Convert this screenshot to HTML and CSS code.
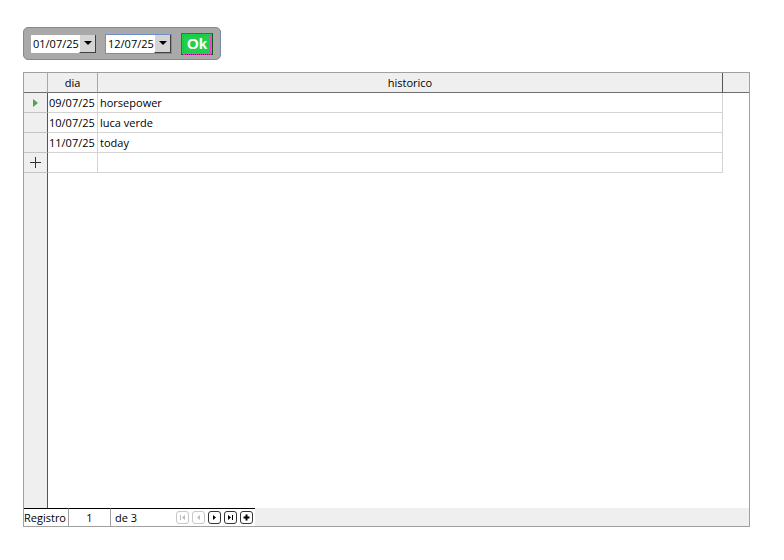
FILE: index.html
```html
<!DOCTYPE html>
<html lang="pt">
<head>
    <meta charset="UTF-8">
    <title>Historico</title>
    <link rel="stylesheet" href="styles.css">
</head>
<body>

    <!-- Filter panel -->
    <div class="filter">
        <div class="datebox">
            <span class="date-text">01/07/25</span>
            <span class="drop"><span class="tri"></span></span>
        </div>
        <div class="datebox active">
            <span class="date-text">12/07/25</span>
            <span class="drop"><span class="tri"></span></span>
        </div>
        <button class="ok-btn"><span>Ok</span></button>
    </div>

    <!-- Table grid -->
    <div class="grid">
        <div class="row head">
            <div class="rh"></div>
            <div class="cell c-dia">dia</div>
            <div class="cell c-hist">historico</div>
            <div class="cell c-extra"></div>
        </div>
        <div class="row">
            <div class="rh"><span class="cur"></span></div>
            <div class="cell c-dia">09/07/25</div>
            <div class="cell c-hist">horsepower</div>
        </div>
        <div class="row">
            <div class="rh"></div>
            <div class="cell c-dia">10/07/25</div>
            <div class="cell c-hist">luca verde</div>
        </div>
        <div class="row">
            <div class="rh"></div>
            <div class="cell c-dia">11/07/25</div>
            <div class="cell c-hist">today</div>
        </div>
        <div class="row">
            <div class="rh plus">
                <svg width="11" height="11" viewBox="0 0 11 11"><path d="M5.5 0 V11 M0 5.5 H11" stroke="#333" stroke-width="1"/></svg>
            </div>
            <div class="cell c-dia"></div>
            <div class="cell c-hist"></div>
        </div>
        <div class="filler">
            <div class="rh"></div>
        </div>
        <div class="nav">
            <span class="nav-label">Registro</span>
            <span class="nav-num">1</span>
            <span class="nav-total">de 3</span>
            <span class="nav-btns">
                <span class="nb off">
                    <svg width="7" height="7" viewBox="0 0 7 7"><rect x="1" y="1" width="1" height="5" fill="#bbb"/><path d="M6 1 L3 3.5 L6 6 Z" fill="#bbb"/></svg>
                </span>
                <span class="nb off">
                    <svg width="7" height="7" viewBox="0 0 7 7"><path d="M5 1 L2 3.5 L5 6 Z" fill="#bbb"/></svg>
                </span>
                <span class="nb">
                    <svg width="7" height="7" viewBox="0 0 7 7"><path d="M2 1 L5 3.5 L2 6 Z" fill="#000"/></svg>
                </span>
                <span class="nb">
                    <svg width="7" height="7" viewBox="0 0 7 7"><path d="M1 1 L4 3.5 L1 6 Z" fill="#000"/><rect x="5" y="1" width="1" height="5" fill="#000"/></svg>
                </span>
                <span class="nb">
                    <svg width="7" height="7" viewBox="0 0 7 7"><path d="M2.5 0.5 H4.5 V2.5 H6.5 V4.5 H4.5 V6.5 H2.5 V4.5 H0.5 V2.5 H2.5 Z" fill="#000"/></svg>
                </span>
            </span>
        </div>
    </div>

</body>
</html>
```

FILE: styles.css
```css
body {
    margin: 0;
    padding: 27px 0 0 23px;
    background-color: #ffffff;
    font-family: 'Open Sans', 'Noto Sans', sans-serif;
    font-size: 11px;
    color: #000;
}

/* filter panel */
.filter {
    display: inline-flex;
    align-items: center;
    gap: 8px;
    height: 31px;
    padding: 0 7px 0 6px;
    background-color: #a9a9a9;
    border: 1px solid #7d8aa3;
    border-radius: 5px;
}

.datebox {
    display: flex;
    align-items: stretch;
    width: 67px;
    height: 20px;
    box-sizing: border-box;
    background: #fff;
    border: 1px solid #a9a9a9;
}

.datebox.active {
    border-color: #6f8fc8;
}

.date-text {
    flex: 1;
    padding-left: 2px;
    line-height: 18px;
    font-size: 11px;
}

.drop {
    width: 15px;
    display: flex;
    align-items: center;
    justify-content: center;
    background: #d4d4d4;
    border-left: 1px solid #fff;
    border-bottom: 1px solid #404040;
    border-right: 1px solid #404040;
}

.tri {
    width: 0;
    height: 0;
    border-left: 4px solid transparent;
    border-right: 4px solid transparent;
    border-top: 4px solid #000;
}

.ok-btn {
    margin-left: 1px;
    width: 32px;
    height: 22px;
    padding: 1px;
    background: #1fd14a;
    border: 1px solid #128a2c;
    border-right-color: #0a5a1a;
    border-bottom-color: #0a5a1a;
    cursor: pointer;
}

.ok-btn span {
    display: block;
    height: 100%;
    border: 1px dotted #e040c0;
    color: #fff;
    font-family: 'Liberation Sans', Arial, sans-serif;
    font-weight: bold;
    font-size: 15px;
    line-height: 16px;
}

/* grid */
.grid {
    margin-top: 12px;
    width: 725px;
    height: 454px;
    display: flex;
    flex-direction: column;
    border-top: 1px solid #a0a0a0;
    border-right: 1px solid #a0a0a0;
    border-left: 1px solid #a0a0a0;
}

.row {
    display: flex;
    height: 20px;
    flex: none;
}

.rh {
    width: 24px;
    flex: none;
    background: #efefef;
    border-right: 1px solid #555;
    border-bottom: 1px solid #c4c4c4;
    box-sizing: border-box;
    display: flex;
    align-items: center;
    justify-content: center;
}

.cell {
    box-sizing: border-box;
    border-bottom: 1px solid #d4d4d4;
    border-right: 1px solid #d4d4d4;
    line-height: 19px;
    padding-left: 2px;
    white-space: nowrap;
    overflow: hidden;
}

.c-dia {
    width: 50px;
    padding-left: 1px;
}

.c-hist {
    width: 625px;
}

.head .rh {
    border-right: 1px solid #a8a8a8;
    border-bottom: 1px solid #6d6d6d;
}

.head .cell {
    background: #efefef;
    border-bottom: 1px solid #6d6d6d;
    border-right: 1px solid #a8a8a8;
    text-align: center;
    padding-left: 0;
}

.head .c-hist {
    border-right: 1px solid #555;
}

.head .c-extra {
    flex: 1;
    border-right: none;
}

.cur {
    width: 0;
    height: 0;
    border-top: 4px solid transparent;
    border-bottom: 4px solid transparent;
    border-left: 5px solid #4aa84a;
    margin-top: 1px;
}

.filler {
    flex: 1;
    display: flex;
}

.filler .rh {
    border-bottom: none;
}

/* record navigation */
.nav {
    flex: none;
    height: 18px;
    display: flex;
    align-items: stretch;
    background: #efefef;
    border-bottom: 1px solid #a0a0a0;
}

.nav-label,
.nav-num,
.nav-total,
.nav-btns {
    background: #fff;
    border-top: 1px solid #000;
    line-height: 17px;
}

.nav-label {
    width: 44px;
    border-right: 1px solid #a0a0a0;
}

.nav-num {
    width: 41px;
    text-align: center;
    border-right: 1px solid #a0a0a0;
}

.nav-total {
    width: 60px;
    padding-left: 4px;
    box-sizing: border-box;
}

.nav-btns {
    width: 84px;
    display: flex;
    align-items: center;
    gap: 3px;
    padding-left: 5px;
    box-sizing: border-box;
}

.nb {
    width: 11px;
    height: 11px;
    border: 1px solid #333;
    border-radius: 3px;
    display: flex;
    align-items: center;
    justify-content: center;
    background: #fff;
}

.nb.off {
    border-color: #c8c8c8;
}
```
